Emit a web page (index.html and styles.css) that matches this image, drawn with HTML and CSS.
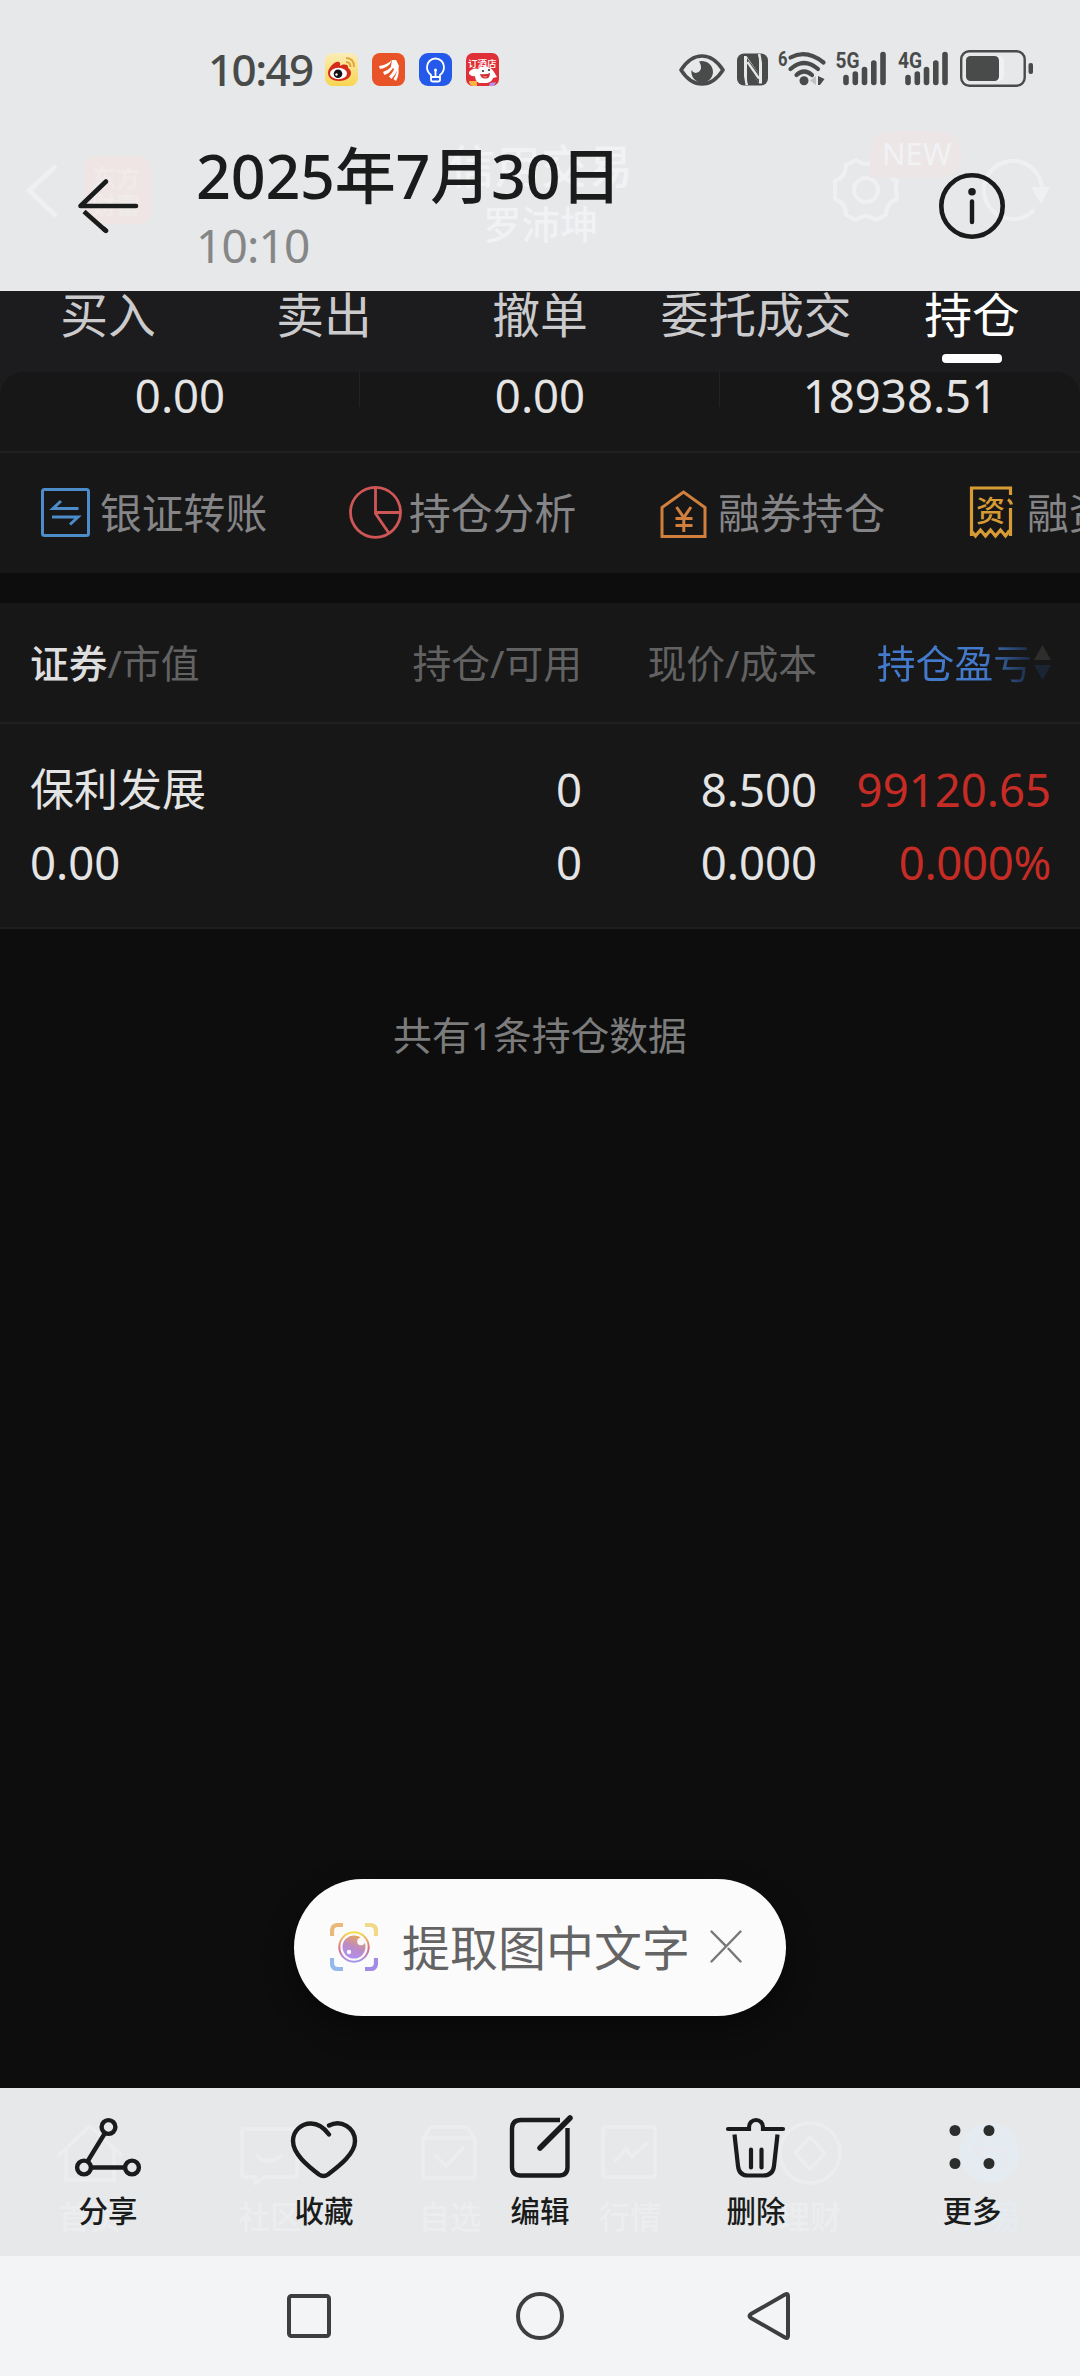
FILE: index.html
```html
<!DOCTYPE html>
<html lang="zh-CN">
<head>
<meta charset="utf-8">
<title>2025年7月30日</title>
<link rel="stylesheet" href="styles.css">
</head>
<body>
<div class="screen">
  <header class="top">
    <div class="under under-top">
      <svg class="under-art" width="1080" height="291" viewBox="0 0 1080 291" fill="none">
        <path d="M56 166 29 190.500 56 216" stroke="#eef0f2" stroke-width="5"/>
        <rect x="84" y="156" width="67" height="68" rx="12" fill="#eee5e4"/>
        <g stroke="#eef0f2" stroke-width="4">
          <circle cx="866" cy="190" r="12"/>
          <path stroke-linejoin="round" d="M856 160q10 8 20 0l10 5q0 12 11 16 -2 0 0 18 -11 4 -11 16l-10 5q-10-8-20 0l-10-5q0-12-11-16v-18q11-4 11-16z"/>
          <path d="M1034 210a29 29 0 1 1 8-20"/>
        </g>
        <path d="M1031 187h19l-9 17z" fill="#eef0f2"/>
        <path d="M870 178v-25q2-22 22-22h46q24 0 24 24 0 23-24 23z" fill="#ede6e6"/>
      </svg>
      <span class="u-logo">东方<br>财富</span>
      <span class="u-title">信用交易</span>
      <span class="u-name">罗沛坤</span>
      <span class="u-new">NEW</span>
    </div>
    <div class="status">
      <span class="clock">10:49</span>
      <div class="apps">
        <svg width="33" height="33" viewBox="0 0 33 33">
          <defs><linearGradient id="wb" x2="0" y2="1"><stop stop-color="#faedb8"/><stop offset="1" stop-color="#f8d54e"/></linearGradient></defs>
          <rect width="33" height="33" rx="8" fill="url(#wb)"/>
          <path d="M3 20C3 14 11 7 14 9c2 1 1 3 1 4 3-2 8-2 8 1 0 2 3 2 3 6 0 5-6 8-12 8S3 25 3 20z" fill="#d52b1c"/>
          <ellipse cx="13.500" cy="20.500" rx="8.500" ry="5.800" fill="#fff"/><circle cx="13" cy="20.800" r="4.300" fill="#111"/><circle cx="11.500" cy="21.500" r="1.200" fill="#fff"/>
          <path d="M21 5q8 0 8 9M21 9q4.500 0 4.500 5" stroke="#e2a63a" stroke-width="2" fill="none"/>
        </svg>
        <svg width="33" height="33" viewBox="0 0 33 33">
          <rect width="33" height="33" rx="8" fill="#e85427"/>
          <path d="M7 13q8-1 13-6-3 8-12 9zM11 19q9-3 11.500-12Q23 18 12.500 22zM17 23.500q7-7 7-16 4.500 9-4.500 18.500zM21.500 26q4.500-7 4-15 3 9-1.500 17z" fill="#fff"/><path d="M20 7h4l3 6-2 6-6-6z" fill="#fff"/>
        </svg>
        <svg width="33" height="33" viewBox="0 0 33 33" fill="none" stroke="#fff" stroke-width="1.800">
          <rect width="33" height="33" rx="9" fill="#2559ea" stroke="none"/>
          <path d="M12 24v-2q-4-3-4-8a8.500 8.500 0 0 1 17 0q0 5-4 8v2zM12 24v3q0 1.500 2 1.500h5q2 0 2-1.500v-3M16.500 17v7"/><circle cx="16.500" cy="17" r="1.500" fill="#fff" stroke="none"/>
        </svg>
        <svg width="33" height="33" viewBox="0 0 33 33">
          <rect width="33" height="33" rx="7" fill="#df3037"/>
          <text x="2" y="14" font-size="9.500" font-weight="500" fill="#fff" class="svg-cjk">订酒店</text>
          <path d="M3 19q4-5 9-3 2-3 5-2l2-2 2 2q5 1 7 5l3 5-4 1q-1 4-6 5H13q-4-2-4-7-3 1-6-2z" fill="#fff"/>
          <path d="M14 21q6 1 10-1 0 6-5 5.500-4 0-5-4.500z" fill="#c92e38"/><path d="M16 23.500q4-1 5.500 0-1 2-5.500 0z" fill="#ed8c76"/>
          <path d="M3 28h8v5H7q-4-1-4-5z" fill="#f8b443"/><path d="M24 30l6-1-2 4h-5z" fill="#b593e6"/><circle cx="17" cy="18" r="1" fill="#222"/><circle cx="23" cy="17" r="1" fill="#222"/>
        </svg>
      </div>
      <svg class="sys" width="356" height="52" viewBox="679 43 356 52" fill="none">
        <path d="M681 70q9-14 21-14t21 14q-9 14-21 14t-21-14z" stroke="#494b4a" stroke-width="3.600" stroke-linejoin="round"/>
        <path d="M699 61.500a10.800 10.800 0 1 1-7.500 8.500q2 4 6 2.500 4-2 3.500-6-.5-3-2-5z" fill="#494b4a"/>
        <rect x="737" y="53.500" width="31" height="32" rx="7" fill="#494b4a"/>
        <path d="M744 56h2.500L759 74V63l-1-9h2.500l1.500 9v20.500h-3L747 66v9l1 10h-2.500L744 76z" fill="#e6e8ea"/>
        <path d="M747 55.500 759 73V62q0-5-2-7.500h-9z" fill="#494b4a"/>
        <path d="M759 83.500 747 66v12q0 5 2 7h9z" fill="#494b4a"/>
        <path d="M747 58v9l12 16v-9z" fill="#494b4a"/>
        <path d="M747.500 62 759 78.500" stroke="#e6e8ea" stroke-width="2.200"/>
        <text class="net" x="778" y="66" font-size="21" textLength="9.500" lengthAdjust="spacingAndGlyphs">6</text>
        <g stroke="#494b4a" stroke-width="4.200" stroke-linecap="round">
          <path d="M790.500 57.500q16-8.500 33 5M790.500 69q13.500-12 27.500 0M796.500 75q7.500-7 15.500 0"/>
        </g>
        <circle cx="804" cy="80.800" r="4.500" fill="#494b4a"/>
        <path d="M816 76v9l-6-4.500z" fill="#bfc1c2"/><path d="M818 76l6.500 3-4.500 6h-2z" fill="#494b4a"/>
        <text class="net" x="835.500" y="68" font-size="22.500" textLength="24" lengthAdjust="spacingAndGlyphs">5G</text>
        <g stroke="#494b4a" stroke-width="5.600" stroke-linecap="round">
          <path d="M846 77.500v5M855.300 74v8.500M864.500 69.500v13M873.800 63v19.500M883 54.500v28"/>
          <path d="M908 77.500v5M917.300 74v8.500M926.500 69.500v13M935.800 63v19.500M945 54.500v28"/>
        </g>
        <text class="net" x="898" y="68" font-size="22.500" textLength="24" lengthAdjust="spacingAndGlyphs">4G</text>
        <rect x="961.200" y="51.200" width="63.500" height="34.600" rx="8" stroke="#494b4a" stroke-width="2.400"/>
        <rect x="990" y="56" width="14" height="25" rx="5" fill="#f0f1f2"/>
        <rect x="966" y="56" width="33" height="25" rx="4.500" fill="#494b4a"/>
        <rect x="1028.500" y="63" width="4.500" height="11" rx="2" fill="#494b4a"/>
      </svg>
    </div>
    <div class="titlebar">
      <svg class="back" width="62" height="56" viewBox="77 178 62 56" fill="none" stroke="#1a1c1b" stroke-width="4.600" stroke-linecap="round" stroke-linejoin="round">
        <path d="M136 206H80.500L106 181.500"/><path d="M84 211.500 106 231" stroke-linecap="butt"/><path d="M104 229l2 1.800"/>
      </svg>
      <div class="titles">
        <h1>2025年7月30日</h1>
        <p>10:10</p>
      </div>
      <svg class="info" width="66" height="66" viewBox="0 0 66 66" fill="none" stroke="#1a1c1b">
        <circle cx="33" cy="33" r="30.700" stroke-width="4.600"/><circle cx="33" cy="18.700" r="3.800" fill="#1a1c1b" stroke="none"/><path d="M33 28.500V49" stroke-width="4.400" stroke-linecap="round"/>
      </svg>
    </div>
  </header>

  <main class="photo">
    <nav class="tabs">
      <span>买入</span><span>卖出</span><span>撤单</span><span>委托成交</span><span class="on">持仓</span>
    </nav>
    <section class="summary">
      <div class="values"><b>0.00</b><b>0.00</b><b>18938.51</b></div>
      <div class="actions">
        <div class="action">
          <svg width="60" height="54" viewBox="40 485 60 54" fill="none" stroke="#4b8cc9" stroke-width="3">
            <rect x="42.500" y="489.500" width="46" height="46" rx="2"/><path d="M78.500 508.500H53L61 501M52 517h26l-8 7.500"/>
          </svg><span>银证转账</span>
        </div>
        <div class="action">
          <svg width="60" height="54" viewBox="347 485 60 54" fill="none" stroke="#cf5656" stroke-width="2.800">
            <circle cx="373.500" cy="512.300" r="25"/><path d="M373.500 487.500v26l14 20.500M373.500 512.500H398.500"/>
          </svg><span>持仓分析</span>
        </div>
        <div class="action">
          <svg width="60" height="54" viewBox="656 485 60 54" fill="none" stroke="#d17f3d" stroke-width="3">
            <path d="M660 507.500 681.500 492 703 507.500V536.500H660z"/><path d="M674.500 507l7.300 10.500L689 507M681.800 517v15M673.500 518.500h17M673.500 525.500h17"/>
          </svg><span>融券持仓</span>
        </div>
        <div class="action">
          <svg width="60" height="54" viewBox="965 485 60 54" fill="none" stroke="#d79b36" stroke-width="3.200">
            <path d="M1008.500 495V488H969.500V536M1008.500 536V508"/><path d="M969 530.500l4.500 5.500 5-6 5 6 5-6 5 6 5-6 5 6 4-5.500"/><path d="M1006 499.500q3 2 3.500 5" />
            <text x="974" y="522" font-size="29" font-weight="500" fill="#d79b36" stroke="none" class="svg-cjk">资</text>
          </svg><span>融资持仓</span>
        </div>
      </div>
    </section>
    <section class="holdings">
      <div class="row head">
        <span><em>证券</em>/市值</span><span>持仓/可用</span><span>现价/成本</span>
        <span class="sort"><i>持仓盈亏</i><svg width="20" height="36" viewBox="0 0 20 36"><path d="M1 15 9.500 0 18 15z" fill="#2d2d2b"/><path d="M1 20h17L9.500 35z" fill="#1a2432"/></svg></span>
      </div>
      <div class="row stock">
        <div class="cell"><strong>保利发展</strong><b>0.00</b></div>
        <div class="cell"><b>0</b><b>0</b></div>
        <div class="cell"><b>8.500</b><b>0.000</b></div>
        <div class="cell gain"><b>99120.65</b><b class="pct">0.000%</b></div>
      </div>
    </section>
    <p class="count">共有1条持仓数据</p>
    <div class="pill">
      <svg width="48" height="48" viewBox="0 0 48 48" fill="none">
        <defs>
          <linearGradient id="lens" x2="0" y2="1"><stop stop-color="#f9dd4f"/><stop offset=".55" stop-color="#d86c85"/><stop offset="1" stop-color="#a396ec"/></linearGradient>
          <linearGradient id="core" x1=".7" x2=".3" y2="1"><stop stop-color="#e9a557"/><stop offset=".5" stop-color="#bd8bc4"/><stop offset="1" stop-color="#ae8ff6"/></linearGradient>
        </defs>
        <g stroke-width="4.200"><path d="M2 13V8q0-6 6-6h5" stroke="#eab878"/><path d="M35 2h5q6 0 6 6v5" stroke="#f2d987"/><path d="M2 35v5q0 6 6 6h5" stroke="#92b9ea"/><path d="M35 46h5q6 0 6-6v-5" stroke="#a28be4"/></g>
        <circle cx="24" cy="24" r="14.700" stroke="url(#lens)" stroke-width="2"/><circle cx="24" cy="24" r="11.500" fill="url(#core)"/><circle cx="31" cy="18.500" r="3.800" fill="#fafafa"/><circle cx="19" cy="29" r="2.200" fill="#fafafa"/>
      </svg>
      <span>提取图中文字</span>
      <svg width="32" height="33" viewBox="0 0 32 33" fill="none" stroke="#777" stroke-width="2.400" stroke-linecap="round"><path d="M1.500 1.500 16 16.200M30.500 1.500 1.500 31.500M18.500 18.800 30.500 31.500"/></svg>
    </div>
  </main>

  <footer class="toolbar">
    <div class="under under-bottom">
      <svg class="under-art" width="1080" height="168" viewBox="0 2088 1080 168" fill="none" stroke="#ecedef" stroke-width="3.500">
        <path d="M58 2156 90 2126 122 2156M66 2149v31h48v-31"/>
        <path d="M242 2131q0-2 2-2h50q3 0 3 3v42q0 3-3 3h-29l-9 6v-6h-12q-2 0-2-2zM256 2155q13 12 26 0"/>
        <path d="M423 2138 431 2127h36l8 11v38q0 2-2 2h-48q-2 0-2-2zM423 2138h52M435 2155l11 11 18-19"/>
        <rect x="603" y="2127" width="52" height="50" rx="2"/><path d="M614 2162 626 2149 632 2157 647 2143"/>
        <circle cx="810" cy="2153" r="30"/><path d="M810 2137 825 2153 810 2169 795 2153z"/>
        <circle cx="989.500" cy="2153" r="30" fill="#e4ebf1" stroke="none"/><path d="M984 2138 973 2149 984 2159M974 2149h20q13 0 12 14-2 6-9 8" stroke="#e7e9ee"/>
      </svg>
      <div class="u-tabs"><span>首页</span><span>社区</span><span>自选</span><span>行情</span><span>理财</span><span class="u-blue">交易</span></div>
    </div>
    <div class="tool">
      <svg width="68" height="66" viewBox="74 2114 68 66" fill="none" stroke="#1a1c1b" stroke-width="4.400"><circle cx="108.500" cy="2127" r="6.900"/><circle cx="84" cy="2167.500" r="6.900"/><circle cx="132" cy="2167.500" r="6.900"/><path d="M105 2133 87.500 2161.500M91 2167.500h34"/></svg>
      <span>分享</span>
    </div>
    <div class="tool">
      <svg width="68" height="66" viewBox="290 2114 68 66" fill="none" stroke="#1a1c1b" stroke-width="4.400" stroke-linecap="round" stroke-linejoin="round"><path d="M329 2134.500Q321 2123.500 311 2123.500C301 2123.500 293 2131 293 2141C293 2154 308 2166 319 2174.500Q323.500 2177.500 328 2174.500C339 2166 355 2154 355 2141C355 2128 341 2119 329 2125.500"/></svg>
      <span>收藏</span>
    </div>
    <div class="tool">
      <svg width="68" height="66" viewBox="506 2114 68 66" fill="none" stroke="#1a1c1b" stroke-width="4.400"><path d="M560 2120H521q-9 0-9 9v38q0 8.500 9 8.500h38q8.500 0 8.500-8.500V2128"/><path d="M570 2118 540 2148" stroke-width="5.500" stroke-linecap="round"/></svg>
      <span>编辑</span>
    </div>
    <div class="tool">
      <svg width="68" height="66" viewBox="722 2114 68 66" fill="none" stroke="#1a1c1b" stroke-width="4.200" stroke-linecap="round"><path d="M728 2129H749V2127a7 7 0 0 1 14 0V2129H783M751 2149.500v18M761.500 2149.500v18"/><path d="M734.500 2134.500 738 2166q1 9.500 10 9.500h15q10 0 11-9.500l3.500-31.500" stroke-linecap="butt"/></svg>
      <span>删除</span>
    </div>
    <div class="tool">
      <svg width="68" height="66" viewBox="938 2114 68 66" fill="#2c2e2d"><circle cx="955" cy="2130.500" r="5.500"/><circle cx="989" cy="2130.500" r="5.500"/><circle cx="955" cy="2163.500" r="5.500"/><circle cx="989" cy="2163.500" r="5.500"/></svg>
      <span>更多</span>
    </div>
  </footer>
  <div class="sysnav">
    <svg width="48" height="48" viewBox="0 0 48 48"><rect x="4" y="4" width="40" height="40" rx="2.500"/></svg>
    <svg width="48" height="48" viewBox="0 0 48 48"><circle cx="24" cy="24" r="22"/></svg>
    <svg width="48" height="48" viewBox="0 0 48 48"><path d="M41 4V44q0 3-3 1.500L4 26q-3-2 0-4L38 2.500q3-1.500 3 1.500z"/></svg>
  </div>
</div>
</body>
</html>
```

FILE: styles.css
```css
* { box-sizing: border-box; }
body { margin: 0; font-family: "Noto Sans", "Noto Sans CJK SC", sans-serif; }
h1, p { margin: 0; }
b, strong, em, i { font-weight: 400; font-style: normal; }
svg { display: block; flex: none; }
.svg-cjk { font-family: "Noto Sans CJK SC", sans-serif; }

.screen { width: 1080px; height: 2376px; overflow: hidden; display: flex; flex-direction: column; background: #0d0d0d; }

/* translucent bars: faint content showing through */
.under { position: absolute; inset: 0; color: #f1f2f4; font-family: "Noto Sans CJK SC", sans-serif; }
.under-art { position: absolute; left: 0; top: 0; }
.under span { position: absolute; white-space: nowrap; line-height: 1; font-weight: 500; }
.under .u-logo { left: 92px; top: 163px; font-size: 24px; line-height: 27px; font-weight: 700; color: #f0ebea; }
.under .u-title { left: 449px; top: 140px; font-size: 46px; }
.under .u-name { left: 483px; top: 203px; font-size: 38.500px; }
.under .u-new { left: 882px; top: 138px; font-family: "Noto Sans", sans-serif; font-size: 31px; font-weight: 400; }
.u-tabs { position: absolute; left: 0; right: 0; top: 112px; display: flex; color: #ecedef; }
.under .u-tabs span { position: static; flex: 1; text-align: center; font-size: 31.500px; }
.under .u-tabs .u-blue { color: #e5ebf0; }

.top { position: relative; flex: none; height: 291px; background: #e6e8ea; color: #1a1c1b; }
.status { position: relative; display: flex; align-items: center; height: 138px; padding: 0 45px 0 208px; }
.clock { width: 117px; font-size: 44px; line-height: 60px; letter-spacing: -1.600px; font-weight: 500; color: #494b4a; }
.apps { display: flex; gap: 14px; }
.sys { margin-left: auto; }
.net { font-family: "Roboto", sans-serif; font-weight: 700; fill: #494b4a; }
.titlebar { position: relative; display: flex; align-items: flex-start; padding: 0 75px 0 77px; }
.back { margin-top: 40px; }
.titles { margin-left: 57px; flex: 1; }
h1 { font-size: 61px; line-height: 76px; font-weight: 500; white-space: nowrap; letter-spacing: -.2px; }
.titles p { font-size: 46px; line-height: 62px; color: #858686; letter-spacing: -.8px; }
.info { margin-top: 35px; }

.photo { position: relative; flex: none; height: 1797px; color: #e4e4e4; background: #0d0d0d; }
.tabs { display: grid; grid-template-columns: repeat(5, 1fr); height: 81px; background: #1c1c1e; color: #cbcbcd; font-size: 47.800px; line-height: 48px; text-align: center; }
.tabs .on { color: #fff; display: flex; flex-direction: column; align-items: center; }
.tabs .on::after { content: ""; width: 60px; height: 9px; margin-top: 15px; border-radius: 4px; background: #fff; }
.summary { background: linear-gradient(#1c1c1e 30px, #171717 30px); }
.values { display: grid; grid-template-columns: repeat(3, 1fr); height: 81px; border-bottom: 2px solid #202020; background: #171717; border-top-left-radius: 24px; border-top-right-radius: 24px; }
.values b { font-size: 45.500px; line-height: 46px; text-align: center; background: linear-gradient(#222, #222) right top / 1px 35px no-repeat; }
.values b:last-child { background: none; }
.actions { display: flex; height: 120px; align-items: center; overflow: hidden; padding-left: 40px; background: #171717; }
.action { display: flex; flex: none; width: 309px; align-items: center; font-size: 41.800px; line-height: 48px; color: #858587; white-space: nowrap; }
.action svg { margin-top: -2px; }

.holdings { margin-top: 30px; background: #171717; }
.row { display: grid; grid-template-columns: 340px 212px 235px 234px; padding: 0 30px; }
.row > * { text-align: right; white-space: nowrap; }
.row > :first-child { text-align: left; }
.head { height: 121px; border-bottom: 2px solid #202020; font-size: 38.800px; line-height: 120px; color: #626262; }
.head em { color: #dedede; font-weight: 500; }
.sort { display: flex; align-items: center; justify-content: flex-end; gap: 1px; margin-right: -2px; }
.sort i { color: transparent; background: linear-gradient(90deg, #447acb 0 68%, #1a273c 100%); background-clip: text; -webkit-background-clip: text; }
.stock { height: 205px; border-bottom: 2px solid #1e1e1e; padding-top: 28px; }
.cell { display: flex; flex-direction: column; }
.cell b, .cell strong { height: 73px; font-size: 45.500px; line-height: 74px; }
.cell strong { font-size: 44px; }
.gain { color: #c52c25; }
.cell .pct { letter-spacing: -.3px; }
.count { margin-top: 75px; text-align: center; font-size: 38.800px; line-height: 62px; color: #7c7c7c; }
.pill { position: absolute; left: 294px; top: 1588px; width: 492px; height: 137px; border-radius: 69px; background: #fbfbfb; box-shadow: 0 12px 30px rgba(0, 0, 0, .4); display: flex; align-items: center; padding-left: 36px; color: #646464; font-size: 48px; line-height: 60px; white-space: nowrap; }
.pill span { width: 309px; margin-left: 24px; margin-right: -1px; }
.pill svg { margin-top: -2px; }

.toolbar { position: relative; flex: none; height: 168px; display: grid; grid-template-columns: repeat(5, 1fr); background: #e7e8ea; }
.tool { position: relative; display: flex; flex-direction: column; align-items: center; padding-top: 26px; color: #1a1c1b; font-size: 29.500px; line-height: 40px; font-weight: 500; }
.tool span { margin-top: 11px; }
.sysnav { flex: 1; display: flex; justify-content: center; gap: 183px; padding-top: 36px; background: #f3f4f6; }
.sysnav svg { fill: none; stroke: #3d3e3e; stroke-width: 4; }
```
